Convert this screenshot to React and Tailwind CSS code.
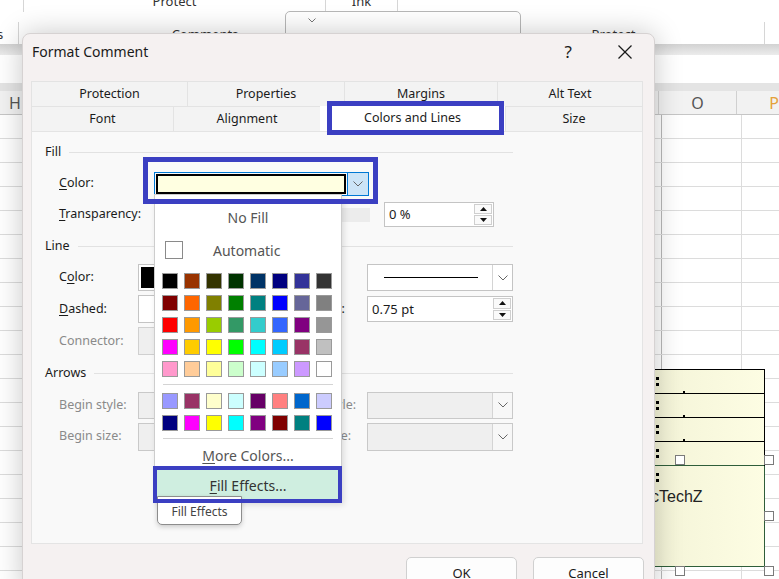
import React from "react";

const palette = [
  ["#000000", "#993300", "#333300", "#003300", "#003366", "#000080", "#333399", "#333333"],
  ["#800000", "#FF6600", "#808000", "#008000", "#008080", "#0000FF", "#666699", "#808080"],
  ["#FF0000", "#FF9900", "#99CC00", "#339966", "#33CCCC", "#3366FF", "#800080", "#969696"],
  ["#FF00FF", "#FFCC00", "#FFFF00", "#00FF00", "#00FFFF", "#00CCFF", "#993366", "#C0C0C0"],
  ["#FF99CC", "#FFCC99", "#FFFF99", "#CCFFCC", "#CCFFFF", "#99CCFF", "#CC99FF", "#FFFFFF"],
];

const chartColors = [
  ["#9999FF", "#993366", "#FFFFCC", "#CCFFFF", "#660066", "#FF8080", "#0066CC", "#CCCCFF"],
  ["#000080", "#FF00FF", "#FFFF00", "#00FFFF", "#800080", "#800000", "#008080", "#0000FF"],
];

function Chevron() {
  return (
    <svg width="10" height="6" viewBox="0 0 10 6">
      <polyline points="0.5,0.5 5,5 9.5,0.5" fill="none" stroke="#666" strokeWidth="1" />
    </svg>
  );
}

function Spin() {
  return (
    <div className="flex flex-col w-[20px] h-full p-[1px] gap-[1px]">
      <div className="flex-1 flex items-center justify-center border border-[#cfcfcf] bg-[#fafafa]">
        <svg width="7" height="4" viewBox="0 0 7 4">
          <polygon points="0,4 3.5,0 7,4" fill="#111" />
        </svg>
      </div>
      <div className="flex-1 flex items-center justify-center border border-[#cfcfcf] bg-[#fafafa]">
        <svg width="7" height="4" viewBox="0 0 7 4">
          <polygon points="0,0 7,0 3.5,4" fill="#111" />
        </svg>
      </div>
    </div>
  );
}

function Heading({ label }) {
  return (
    <div className="flex items-center h-[32px]">
      <span className="text-[12.5px] text-[#1b1b1b]">{label}</span>
      <div className="flex-1 h-px bg-[#e2e2e2] ml-[8px]" />
    </div>
  );
}

function Swatches({ rows }) {
  return (
    <div className="ml-[7px] grid grid-cols-8 gap-[6px] w-fit">
      {rows.flat().map((c, i) => (
        <div key={i} className="w-[16px] h-[16px] border border-[#9a9a9a]" style={{ backgroundColor: c }} />
      ))}
    </div>
  );
}

function DisabledCombo({ className }) {
  return (
    <div className={"flex border border-[#c9c9c9] bg-[#efefef] " + className}>
      <div className="flex-1" />
      <div className="w-[20px] flex items-center justify-center border-l border-[#d4d4d4] bg-[#f7f7f7]">
        <Chevron />
      </div>
    </div>
  );
}

function Dialog() {
  return (
    <div className="absolute left-[22px] top-[33px] w-[633px] h-[560px] rounded-t-[8px] bg-[#f5f1f1] border border-[#d6d2d2] shadow-[0_0_28px_rgba(0,0,0,0.22)] z-10">
      {/* title bar */}
      <div className="h-[47px] flex items-start pt-[8px] pl-[9px] pr-[22px]">
        <span className="text-[14px] leading-[20px] text-[#1a1a1a]">Format Comment</span>
        <span className="ml-auto text-[17px] leading-[20px] text-[#1a1a1a]">?</span>
        <svg width="14" height="14" viewBox="0 0 14 14" className="ml-[46px] mt-[3px]">
          <line x1="0.5" y1="0.5" x2="13.5" y2="13.5" stroke="#1a1a1a" strokeWidth="1.2" />
          <line x1="13.5" y1="0.5" x2="0.5" y2="13.5" stroke="#1a1a1a" strokeWidth="1.2" />
        </svg>
      </div>

      {/* tabs */}
      <div className="ml-[8px] w-[612px] text-[12.5px] text-[#1b1b1b]">
        <div className="flex h-[25px]">
          {[["Protection", 156], ["Properties", 157], ["Margins", 153], ["Alt Text", 146]].map(([t, w], i) => (
            <div
              key={t}
              className={"flex items-center justify-center border-t border-l border-[#e3e3e3] bg-[#f3f3f3] " + (i === 3 ? "border-r" : "")}
              style={{ width: w }}
            >
              {t}
            </div>
          ))}
        </div>
        <div className="flex h-[25px]">
          <div className="w-[142px] flex items-center justify-center border-t border-l border-[#e3e3e3] bg-[#f3f3f3]">Font</div>
          <div className="w-[147px] flex items-center justify-center border-t border-l border-[#e3e3e3] bg-[#f3f3f3]">Alignment</div>
          <div className="w-[185px] flex items-center justify-center bg-white">Colors and Lines</div>
          <div className="w-[138px] flex items-center justify-center border-t border-x border-[#e3e3e3] bg-[#f3f3f3]">Size</div>
        </div>
      </div>

      {/* panel */}
      <div className="ml-[8px] w-[612px] h-[413px] bg-[#f9f9f9] border border-[#e4e4e4] text-[12.5px] text-[#1b1b1b]">
        <div className="pt-[4px] pl-[13px] w-[481px]">
          <Heading label="Fill" />
          <div className="flex items-center h-[31px]">
            <span className="ml-[14px] w-[95px]">
              <span className="underline underline-offset-2">C</span>olor:
            </span>
            <div className="flex h-[24px] w-[215px]">
              <div className="flex-1 border border-[#0078d4] p-px">
                <div className="w-full h-full border-2 border-black bg-[#ffffe1]" />
              </div>
              <div className="w-[21px] flex items-center justify-center border border-l-0 border-[#0078d4] bg-[#cce4f7]">
                <Chevron />
              </div>
            </div>
          </div>
          <div className="flex items-center h-[31px]">
            <span className="ml-[14px] w-[95px]">
              <span className="underline underline-offset-2">T</span>ransparency:
            </span>
            <div className="w-[216px] h-[14px] bg-[#ececec]" />
            <div className="ml-[14px] w-[110px] h-[25px] flex border border-[#c4c4c4] bg-white">
              <span className="flex-1 pl-[4px] leading-[23px] text-[13px]">0 %</span>
              <Spin />
            </div>
          </div>

          <Heading label="Line" />
          <div className="flex items-center h-[31px]">
            <span className="ml-[14px] w-[79px]">
              C<span className="underline underline-offset-2">o</span>lor:
            </span>
            <div className="w-[150px] h-[27px] border border-[#c4c4c4] bg-white p-[2px] pr-[40px]">
              <div className="w-full h-full bg-black" />
            </div>
            <span className="w-[79px] pl-[12px]">Style:</span>
            <div className="w-[146px] h-[27px] flex border border-[#c4c4c4] bg-white">
              <div className="flex-1 flex items-center pl-[16px] pr-[14px]">
                <div className="w-full h-px bg-black" />
              </div>
              <div className="w-[20px] flex items-center justify-center border-l border-[#d4d4d4]">
                <Chevron />
              </div>
            </div>
          </div>
          <div className="flex items-center h-[32px]">
            <span className="ml-[14px] w-[79px]">
              <span className="underline underline-offset-2">D</span>ashed:
            </span>
            <div className="w-[150px] h-[28px] border border-[#c4c4c4] bg-white" />
            <span className="w-[79px] pl-[12px]">Weight:</span>
            <div className="w-[146px] h-[26px] flex border border-[#c4c4c4] bg-white">
              <span className="flex-1 pl-[4px] leading-[24px] text-[13px]">0.75 pt</span>
              <Spin />
            </div>
          </div>
          <div className="flex items-center h-[32px] text-[#8a8a8a]">
            <span className="ml-[14px] w-[79px]">Connector:</span>
            <div className="w-[150px] h-[28px] border border-[#d0d0d0] bg-[#efefef]" />
          </div>

          <Heading label="Arrows" />
          <div className="flex items-center h-[32px] text-[#8a8a8a]">
            <span className="ml-[14px] w-[79px]">Begin style:</span>
            <DisabledCombo className="w-[150px] h-[27px]" />
            <span className="w-[79px] pl-[12px]">End style:</span>
            <DisabledCombo className="w-[146px] h-[27px]" />
          </div>
          <div className="flex items-center h-[31px] text-[#8a8a8a]">
            <span className="ml-[14px] w-[79px]">Begin size:</span>
            <DisabledCombo className="w-[150px] h-[28px]" />
            <span className="w-[79px] pl-[12px]">End size:</span>
            <DisabledCombo className="w-[146px] h-[28px]" />
          </div>
        </div>
      </div>

      {/* buttons */}
      <div className="flex justify-end gap-[16px] pr-[10px] mt-[13px] text-[13px] text-[#1b1b1b]">
        <div className="w-[111px] h-[34px] rounded-[5px] border border-[#d0d0d0] bg-[#fdfdfd] flex items-center justify-center">OK</div>
        <div className="w-[111px] h-[34px] rounded-[5px] border border-[#d0d0d0] bg-[#fdfdfd] flex items-center justify-center">Cancel</div>
      </div>

      {/* colour dropdown */}
      <div className="absolute left-[131px] top-[160px] w-[188px] h-[308px] bg-white border border-[#cdcdcd] shadow-[2px_3px_6px_rgba(0,0,0,0.12)] text-[14px] text-[#555]">
        <div className="h-[44px] flex items-center justify-center">No Fill</div>
        <div className="h-[22px] flex items-center pl-[10px]">
          <div className="w-[18px] h-[18px] border border-[#8a8a8a]" />
          <span className="ml-[30px]">Automatic</span>
        </div>
        <div className="mt-[12px]">
          <Swatches rows={palette} />
        </div>
        <div className="mt-[7px] mx-[8px] h-px bg-[#d4d4d4]" />
        <div className="mt-[8px]">
          <Swatches rows={chartColors} />
        </div>
        <div className="mt-[7px] mx-[8px] h-px bg-[#d4d4d4]" />
        <div className="h-[30px] flex items-center justify-center pt-[2px]">
          <span>
            <span className="underline underline-offset-2">M</span>ore Colors...
          </span>
        </div>
        <div className="h-[32px] flex items-center justify-center bg-[#cfeee0] text-[#333]">
          <span>
            <span className="underline underline-offset-2">F</span>ill Effects...
          </span>
        </div>
      </div>

      {/* tooltip */}
      <div className="absolute left-[134px] top-[462px] w-[85px] h-[29px] bg-white border border-[#8d8d8d] rounded-b-[5px] shadow-[0_2px_5px_rgba(0,0,0,0.18)] flex items-end justify-center pb-[3px] text-[12px] text-[#444]">
        Fill Effects
      </div>

      {/* highlight boxes */}
      <div className="absolute left-[304px] top-[67px] w-[177px] h-[34px] border-[5px] border-[#3b3fc2]" />
      <div className="absolute left-[120px] top-[123px] w-[235px] h-[47px] border-[5px] border-[#3b3fc2]" />
      <div className="absolute left-[130px] top-[432px] w-[189px] h-[37px] border-[4px] border-[#3b3fc2]" />
    </div>
  );
}

function CommentBox() {
  const rows = [0, 1, 2, 3];
  return (
    <div className="absolute left-[655px] top-[369px] w-[110px] h-[198px] bg-gradient-to-r from-[#f4f4d8] to-[#fdfde3] border-t border-r border-black">
      {rows.map((r) => (
        <div key={r} className={"relative h-[24px] border-b " + (r === 3 ? "border-[#2f5e3a]" : "border-black")}>
          <div className="absolute left-[1px] top-[7px] w-[3px] h-[3px] bg-black" />
          <div className="absolute left-[1px] top-[13px] w-[3px] h-[3px] bg-black" />
          <div className="absolute left-[28px] top-[21px] w-[2px] h-[2px] bg-black" />
        </div>
      ))}
      <div className="relative h-[101px] border-r border-b border-[#2f5e3a] -mr-px">
        <div className="absolute left-[1px] top-[7px] w-[3px] h-[3px] bg-black" />
        <div className="absolute left-[1px] top-[13px] w-[3px] h-[3px] bg-black" />
        <div className="pt-[19px] -ml-[4px] text-[16px] text-[#222] font-['Liberation_Sans',sans-serif]">cTechZ</div>
      </div>
    </div>
  );
}

function Handle({ x, y }) {
  return (
    <div
      className="absolute w-[10px] h-[10px] bg-white border border-[#7a7a7a] z-20"
      style={{ left: x - 5, top: y - 5 }}
    />
  );
}

export default function App() {
  const sheetRows = Array.from({ length: 20 }, (_, i) => i);
  return (
    <div className="relative w-[779px] h-[579px] overflow-hidden bg-white font-['Noto_Sans',sans-serif]">
      {/* ribbon */}
      <div className="h-[12px] flex text-[13px] text-[#333] overflow-hidden">
        <div className="w-[24px] border-r border-[#d6d6d6]" />
        <div className="w-[302px] border-r border-[#d6d6d6] flex justify-center">
          <span className="-mt-[8px] leading-[18px]">Protect</span>
        </div>
        <div className="w-[72px] border-r border-[#d6d6d6] flex justify-center">
          <span className="-mt-[8px] leading-[18px]">Ink</span>
        </div>
      </div>
      <div className="h-[10px]" />
      <div className="h-[22px] flex items-center text-[13px] text-[#333]">
        <div className="w-[19px] h-full border-r border-[#d6d6d6] flex items-center">
          <span className="-ml-[3px] pt-[4px]">s</span>
        </div>
        <div className="w-[373px] h-full border-r border-[#d6d6d6] flex items-center justify-center pt-[4px]">Comments</div>
        <div className="w-[71px] h-full border-r border-[#d6d6d6] flex items-center justify-center pt-[4px]">Notes</div>
        <div className="w-[302px] h-full border-r border-[#d6d6d6] flex items-center justify-center pt-[4px]">Protect</div>
      </div>
      <div className="h-[11px] bg-gradient-to-b from-[#d2d2d2] to-[#ececec]" />
      <div className="h-[28px] bg-white" />
      <div className="h-[8px] bg-[#e4e4e4]" />
      <div className="h-[24px] flex bg-[#f2f2f2] border-b border-[#c6c6c6] text-[16px] text-[#555]">
        <div className="w-[30px] flex items-center justify-center">H</div>
        <div className="w-[632px]" />
        <div className="w-[80px] flex items-center justify-center border-l border-r border-[#d0d0d0]">O</div>
        <div className="flex-1 flex items-center pl-[32px] text-[#e4a13a]">P</div>
      </div>
      {sheetRows.map((r) => (
        <div key={r} className="h-[24px] flex border-b border-[#dcdcdc]">
          <div className="w-[662px] border-r border-[#b9b9b9]" />
          <div className="w-[80px] border-r border-[#dcdcdc]" />
        </div>
      ))}

      {/* floating dropdown box in ribbon */}
      <div className="absolute left-[285px] top-[11px] w-[236px] h-[30px] rounded-[5px] border border-[#b8b8b8] bg-white">
        <svg width="8" height="5" viewBox="0 0 8 5" className="absolute left-[22px] top-[6px]">
          <polyline points="0.5,0.5 4,4 7.5,0.5" fill="none" stroke="#777" strokeWidth="1" />
        </svg>
      </div>

      <CommentBox />
      <Handle x={680} y={460} />
      <Handle x={769} y={460} />
      <Handle x={769} y={516} />
      <Handle x={680} y={571} />
      <Handle x={769} y={571} />

      <Dialog />
    </div>
  );
}
